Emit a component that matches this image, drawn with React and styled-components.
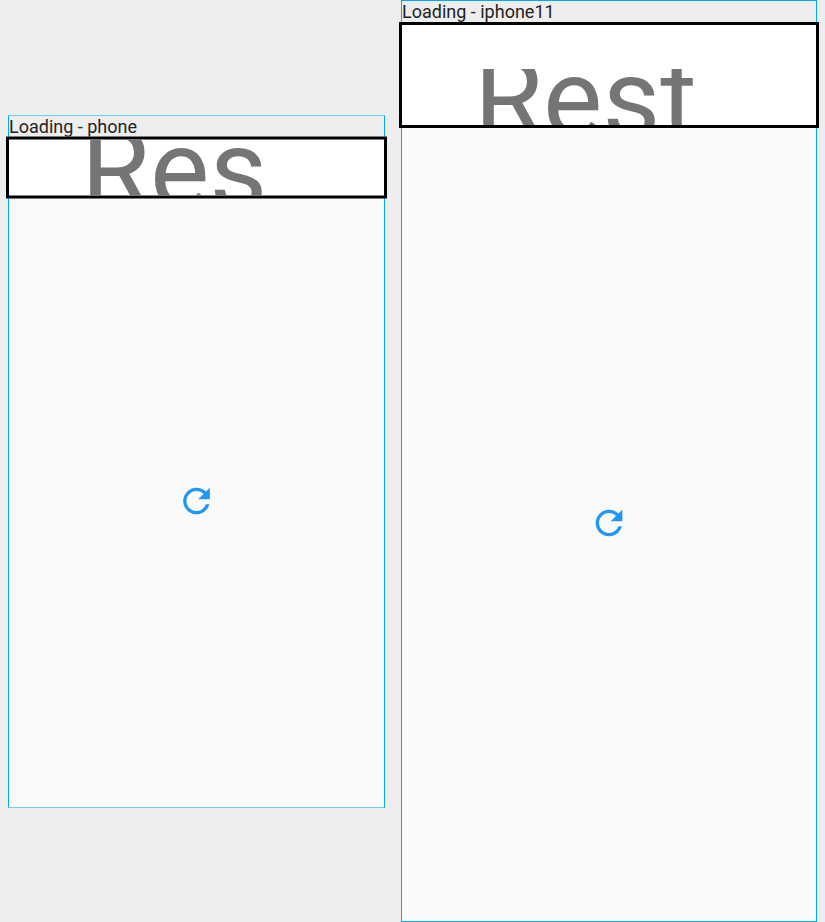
import React from "react";
import styled, { createGlobalStyle } from "styled-components";

const GlobalStyle = createGlobalStyle`
  * { box-sizing: border-box; }
  body { margin: 0; background: #eeeeee; font-family: Roboto, sans-serif; overflow: hidden; }
`;

const Board = styled.main`
  display: flex;
  align-items: flex-start;
  gap: 16px;
  width: 825px;
  height: 922px;
  padding-left: 8px;
  background: #eeeeee;
`;

const Frame = styled.section`
  display: flex;
  flex-direction: column;
  flex: none;
  width: ${(p) => p.$width}px;
  height: ${(p) => p.$height}px;
  margin-top: ${(p) => p.$top}px;
  border: 1px solid #03a9f4;
  border-top-color: ${(p) => p.$edge};
  border-bottom-color: ${(p) => p.$edge};
  background: #fafafa;
`;

const Label = styled.header`
  flex: none;
  height: 21px;
  overflow: hidden;
  background: #eeeeee;
  color: #222;
  font-size: 18px;
  line-height: 21px;
  white-space: nowrap;
`;

const AppBar = styled.div`
  flex: none;
  height: ${(p) => p.$height}px;
  margin: 0 -3px;
  padding-top: ${(p) => p.$inset}px;
  border: 3px solid #000;
  background: #fff;
  transform: translateY(${(p) => p.$shift}px);
`;

const TitleClip = styled.div`
  height: 56px;
  padding-left: ${(p) => p.$indent}px;
  overflow: hidden;
`;

const Title = styled.h1`
  margin: -36px 0 0;
  color: #757575;
  font-size: 112px;
  font-weight: 400;
  line-height: 132px;
  white-space: nowrap;
`;

const Content = styled.div`
  display: flex;
  justify-content: center;
  padding-top: ${(p) => p.$top}px;
`;

const RefreshIcon = styled.svg`
  display: block;
  width: 40px;
  height: 40px;
  fill: #2196f3;
`;

const devices = [
  { label: "Loading - phone", title: "Res", width: 377, height: 693, top: 115, edge: "#75cbf4", bar: 62, inset: 0, shift: -0.5, indent: 72, iconTop: 282, iconX: -0.3 },
  { label: "Loading - iphone11", title: "Rest", width: 416, height: 922, top: 0, edge: "#03a9f4", bar: 106, inset: 44, shift: 0, indent: 72, iconTop: 375, iconX: 0 },
];

function DevicePreview({ device }) {
  return (
    <Frame $width={device.width} $height={device.height} $top={device.top} $edge={device.edge}>
      <Label>{device.label}</Label>
      <AppBar $height={device.bar} $inset={device.inset} $shift={device.shift}>
        <TitleClip $indent={device.indent}>
          <Title>{device.title}</Title>
        </TitleClip>
      </AppBar>
      <Content $top={device.iconTop}>
        <RefreshIcon viewBox={`${-device.iconX} 0 24 24`} aria-label="Refresh">
          <path d="M17.65 6.35C16.2 4.9 14.21 4 12 4c-4.42 0-7.99 3.58-7.99 8s3.57 8 7.99 8c3.73 0 6.84-2.55 7.73-6h-2.08c-.82 2.33-3.04 4-5.65 4-3.31 0-6-2.69-6-6s2.69-6 6-6c1.66 0 3.14.69 4.22 1.78L13 11h7V4l-2.35 2.35z" />
        </RefreshIcon>
      </Content>
    </Frame>
  );
}

export default function App() {
  return (
    <>
      <GlobalStyle />
      <Board>
        {devices.map((device) => (
          <DevicePreview key={device.label} device={device} />
        ))}
      </Board>
    </>
  );
}
